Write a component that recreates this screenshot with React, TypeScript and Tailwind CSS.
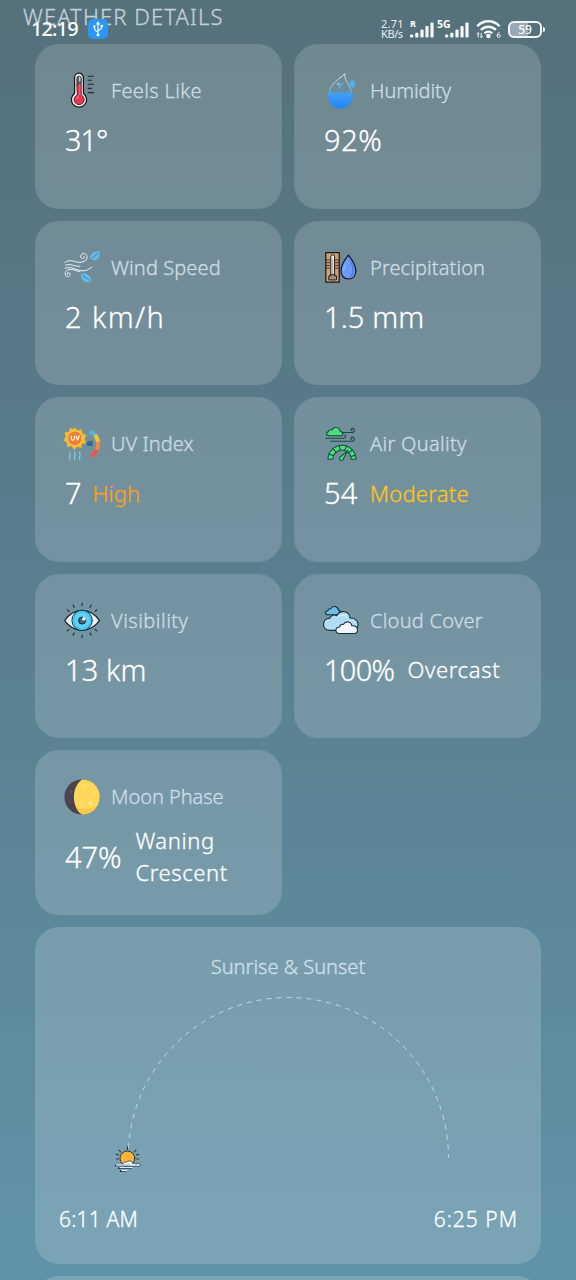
import React from "react";

type Metric = {
  label: string;
  labelClass: string;
  value: string;
  valueClass: string;
  note?: string;
  noteClass?: string;
  icon: React.ReactNode;
};

const Icon = ({ children }: { children: React.ReactNode }) => (
  <svg viewBox="0 0 36 36" className="h-9 w-9 shrink-0 overflow-visible" fill="none" strokeLinecap="round" strokeLinejoin="round">
    {children}
  </svg>
);

const Thermometer = () => (
  <Icon>
    <path d="M10.6 4.6a4.4 4.4 0 0 1 8.8 0V20.4a7.6 7.6 0 1 1-8.8 0Z" fill="#f4f5f8" stroke="#15171c" strokeWidth="1.3" />
    <path d="M12.9 10V5.2a2.2 2.2 0 0 1 4.4 0V10Z" fill="#55646d" stroke="#15171c" strokeWidth=".7" />
    <path d="M15.8 4v4" stroke="#dfe6ea" strokeWidth="1.2" />
    <path d="M13 11h4.2v10.9a5.1 5.1 0 1 1-4.2 0Z" fill="#e8394c" stroke="#3a1b25" strokeWidth=".8" />
    <path d="M15.8 11v11" stroke="#f56a72" strokeWidth="1" />
    <path d="M12.4 25.6a2.8 2.8 0 0 1 1.8-1.6" stroke="#ff98a0" strokeWidth="1" />
    <path d="M24.2 3.2h5.2M24.2 7.3h3.4M24.2 11.3h5.2M24.2 15.4h3.4M24.2 19.6h5.2" stroke="#22282c" strokeWidth="1.1" />
  </Icon>
);

const Humidity = () => (
  <Icon>
    <defs>
      <linearGradient id="water" x1="0" y1="16" x2="0" y2="35" gradientUnits="userSpaceOnUse">
        <stop stopColor="#49a8ee" />
        <stop offset="1" stopColor="#2484fb" />
      </linearGradient>
      <linearGradient id="shell" x1="0" y1="0" x2="0" y2="24" gradientUnits="userSpaceOnUse">
        <stop stopColor="#d9f3fa" />
        <stop offset="1" stopColor="#49a8ee" />
      </linearGradient>
    </defs>
    <path d="M6.2 22C5.8 11 15.8 6.6 21.8.8 21 8 28.6 14 29.1 22" stroke="url(#shell)" strokeWidth="1" />
    <path d="M5.7 20.2c2-1.8 4.2-2.2 6-.8 2.2 1.7 3.7-.6 5.7-.6s3.2 2 5.4.8c2-1.1 4.4-.9 6.3.2A12.2 12.2 0 1 1 5.7 20.2Z" fill="url(#water)" />
    <path d="m20.3 9.8-5 5.7" stroke="#62b9ef" strokeWidth="1.1" />
    <circle cx="15.5" cy="11" r="1.2" stroke="#8dd1f4" />
    <circle cx="20" cy="14.6" r="1.2" stroke="#3e9fe9" />
    <circle cx="13.3" cy="17.3" r=".9" fill="#45a3ec" />
    <circle cx="22.8" cy="17.7" r=".8" fill="#45a3ec" />
    <path d="M29.3 6c2 2.4 3.2 3.7 3.2 5.5a3 3 0 0 1-6 0c0-1.8 1.2-3.3 2.8-5.5Z" fill="#54aeee" />
  </Icon>
);

const Wind = () => (
  <Icon>
    <g stroke="#edf5fa" strokeWidth="1">
      <path d="M1 12.4c5.4-3.7 8.6-.6 12.9-.2 4.7.5 8.7-1 9.2-4.5.3-3.2-2.8-5-5.1-3.7-2.1 1.2-1.7 4.5.5 4.7 1.7.1 2.5-1.7 1.2-2.7" />
      <path d="M1.5 15.2c5-2.1 8.9 1.5 14.4 1.1M1 18.2c7-2.8 12 3.5 19.4 2.5 3.2-.4 5.3-2 7.5-3.7" />
      <path d="M15.8 21.8C11 20.4 7.3 18.5 3.8 20c-3.5 1.5-3.4 6.1-.4 6.6 2.8.4 3.7-3 1.6-3.9-1.3-.5-2.4.8-1.7 1.9" />
    </g>
    <path d="M26.6 9.6C25 4.6 29.4.4 35.6 1.6 36.8 8 32.6 12 26.6 9.6Z" fill="#62bde8" />
    <path d="m27.4 9 6.4-5.6" stroke="#2f83b0" strokeWidth=".9" />
    <path d="M16.8 24c5.2-2 10.6 1.2 10.4 8-6 1.4-11-2.2-10.4-8Z" fill="#62bde8" />
    <path d="m18.8 25.6 6.6 4.8" stroke="#2f83b0" strokeWidth=".9" />
  </Icon>
);

const Precipitation = () => (
  <Icon>
    <path d="M2.8 2.6h13.4v29.6H2.8Z" fill="#cfa16c" stroke="#15171b" strokeWidth="1.2" strokeLinejoin="miter" />
    <path d="M3.5 10h3M3.5 12.7h3M3.5 15.4h3M3.5 18.1h3M12.6 10h3M12.6 12.7h3M12.6 15.4h3M12.6 18.1h3" stroke="#2e241d" strokeWidth=".9" />
    <path d="M7.8 26.8V6.6a1.9 1.9 0 0 1 3.8 0v20.2" fill="#f1ece4" stroke="#15171b" strokeWidth="1" />
    <path d="M9.7 10v15" stroke="#9297a0" strokeWidth=".8" />
    <path d="M5.8 29.5v-3.6h1.8v-1.2h4.1v1.2h1.8v3.6Z" fill="#9b9486" stroke="#15171b" strokeWidth=".9" />
    <path d="M25.4 5.2c4.5 6.1 7.4 10.1 7.4 15.5 0 5-3 8.3-7.4 8.3s-7.4-3.3-7.4-8.3c0-5.4 2.9-9.4 7.4-15.5Z" fill="#6c9af5" stroke="#10152a" strokeWidth="1.2" />
    <path d="M26.8 9c3 4.6 4.3 7.4 4.3 11.4 0 3.8-2.1 6.6-5.3 7.2 6.3-5 2.5-12.6 1-18.6Z" fill="#4f80e6" />
    <path d="M20.7 20.4c0-2 .7-3.6 1.7-5.3" stroke="#a9c7ff" strokeWidth="1" />
  </Icon>
);

const UvIndex = () => (
  <Icon>
    <path d="m10.7 1.3 2.9 3.2 4.2-1.3.7 4.3 4 1.6-2 3.8 1.8 4-4.1 1-1.1 4.2-4-1.3-3 3-2.5-3.5-4.4.6-.2-4.4-3.6-2.2 2.3-3.5L.5 6.7l4.2-.9L6.2 2l3.8.9Z" fill="#f3bd2d" />
    <circle cx="10.9" cy="12.3" r="7.3" fill="#ed7c36" stroke="#f9d154" strokeWidth=".8" />
    <path d="M7.3 10v2.4c0 2.2 3.1 2.2 3.1 0V10M12 10l1.6 4 1.7-4" stroke="#fff4df" strokeWidth="1.25" />
    <path d="M6 26c-2 1.5 1.4 2.5 0 4s-.9 2.4 0 3.8M11 26c-2 1.5 1.4 2.5 0 4s-.9 2.4 0 3.8M16 26c-2 1.5 1.4 2.5 0 4s-.9 2.4 0 3.8" stroke="#7cc8ee" strokeWidth="1.2" />
    <g strokeWidth="4" strokeLinecap="butt">
      <path d="M25.8 5.7A13 13 0 0 1 31.2 9.1" stroke="#55b6dc" />
      <path d="M31 8.9A13 13 0 0 1 34 16.6" stroke="#f6bd3e" />
      <path d="M34 16A13 13 0 0 1 32.6 24" stroke="#f38a35" />
      <path d="M32.8 23.6A13 13 0 0 1 26.7 30" stroke="#e45850" />
    </g>
    <path d="m24.2 15.4 4.3-1 .3 5.6-3.6-.2a2.2 2.2 0 1 1-1-4.4Z" fill="#2b659c" />
  </Icon>
);

const AirQuality = () => (
  <Icon>
    <g stroke="#174b3e" strokeWidth="1.1">
      <path d="M7.2 9.8h10.2c3.2 0 3.1-4.3-.3-4.5-.6-4.5-6.7-5.2-8.2-1.3-2-.8-3.5.2-3.7 1.9-2.5.1-2.6 3.9 2 3.9Z" fill="#48df7c" />
      <path d="M19 6.5h10c3.1 0 2.9-4.1.5-4.1-1.7 0-2 2.1-.5 2.3M2.5 12.2h18c2.7 0 2.7-3.2.8-3.2M7.5 15.3h21c3.6 0 3.6-4.2.7-4.2-1.6 0-1.8 2-.5 2.4M4 12.2h1" />
      <path d="M5 33.2a14 14 0 0 1 28 0h-4.8a9.2 9.2 0 0 0-18.4 0Z" fill="#48df7c" />
      <path d="m6.1 28.1 4.3 1.7M10 22.7l3 3.3M16.3 19.5l.8 4.5M23.5 20.1l-1.8 4.2M29.4 24l-3.6 2.8M32 29.4l-4.2 1.1" />
      <path d="m25 24.3-7.2 6.3a2 2 0 1 0 2.6 2.2Z" fill="#48df7c" />
    </g>
  </Icon>
);

const Eye = () => (
  <Icon>
    <path d="M.7 17.7C9.8 4 26.2 4 35.5 17.7 26.2 30.5 9.8 30.5.7 17.7Z" fill="#e9eef2" stroke="#15232d" strokeWidth="1.2" />
    <circle cx="18.1" cy="17.4" r="10.2" fill="#49c3e9" stroke="#173d51" strokeWidth="1" />
    <circle cx="18.1" cy="17.4" r="7.6" fill="#5bd3f4" />
    <circle cx="18.1" cy="17.6" r="3.5" fill="#4d6270" stroke="#102735" strokeWidth="1" />
    <circle cx="19.9" cy="15.8" r="1.9" fill="#dceff5" />
    <path d="M18.1.1v2.5M9.1 2l1 2.4M27.1 2l-1 2.4M3.3 6.8l1.8 1.6M32.9 6.8l-1.8 1.6M18.1 32.1v2.5M9.1 32.3l1-2.3M27.1 32.3l-1-2.3M3.3 27.8l1.8-1.5M32.9 27.8l-1.8-1.5" stroke="#1a2830" strokeWidth="1.1" />
  </Icon>
);

const Clouds = () => (
  <Icon>
    <g stroke="#172e3d" strokeWidth="1.1">
      <path d="M5 11.8h10.2c3 0 3-4.5.1-4.7-.3-4-6-5.1-7.5-1.3-1.7-.3-2.7.6-2.9 1.9-3.2 0-3.2 4.1.1 4.1Z" fill="#71bfe8" />
      <path d="M7.2 27.4c-8.9 0-8.9-11.8-.3-12.3 1-2.9 4.3-3.8 6.8-2.4 3.2-6.2 13-5.2 13.3 2.4 9.6-.7 11.2 11.7 1.7 12.3Z" fill="#b2dcf4" />
      <path d="M16.4 30.5c-4.7 0-4.7-6.3.3-6.5.2-2.2 1.8-3.1 3.6-2.5 2.2-4.1 8.1-3.2 8.5 1.3 7.1-.7 7.2 7.7 2.4 7.7Z" fill="#eff5fa" />
    </g>
    <path d="M14 15c2-3.3 6.6-4 9.2-1.4" stroke="#e1f4fc" strokeWidth="1" />
  </Icon>
);

const Moon = () => (
  <Icon>
    <circle cx="18" cy="18" r="17.6" fill="#4c4250" />
    <path d="M18.2.4a17.6 17.6 0 0 1 0 35.2C7.1 28.4 7.1 7.8 18.2.4Z" fill="#ffd85b" />
    <path d="M12 28c4.2 2.6 14.4 2.5 20.8-.4A17.6 17.6 0 0 1 18.2 35.6C15.2 33.7 13 30.8 12 28Z" fill="#fbc54e" />
    <circle cx="16.2" cy="24" r="1.6" fill="#ffe27a" />
    <circle cx="26.3" cy="24.6" r="2" fill="#ffe991" />
    <circle cx="29.8" cy="14" r="1.2" fill="#ffe582" />
    <circle cx="20" cy="6" r="1.2" fill="#ffe582" />
    <circle cx="6.5" cy="13" r="1.7" fill="#5c5060" />
    <circle cx="6" cy="23" r="1.2" fill="#5c5060" />
  </Icon>
);

const metrics: Metric[] = [
  { label: "Feels Like", labelClass: "tracking-[0.35px]", value: "31°", valueClass: "tracking-[-1px]", icon: <Thermometer /> },
  { label: "Humidity", labelClass: "tracking-[-0.1px]", value: "92%", valueClass: "tracking-[0.6px]", icon: <Humidity /> },
  { label: "Wind Speed", labelClass: "tracking-[0.1px]", value: "2 km/h", valueClass: "tracking-[1.4px]", icon: <Wind /> },
  { label: "Precipitation", labelClass: "tracking-[0.1px]", value: "1.5 mm", valueClass: "tracking-[0.1px]", icon: <Precipitation /> },
  { label: "UV Index", labelClass: "tracking-[0.05px]", value: "7", valueClass: "", note: "High", noteClass: "-ml-px text-[#fba01a] tracking-[0.1px]", icon: <UvIndex /> },
  { label: "Air Quality", labelClass: "tracking-[0.3px]", value: "54", valueClass: "tracking-[0.3px]", note: "Moderate", noteClass: "text-[#ffc21c] tracking-[0.25px]", icon: <AirQuality /> },
  { label: "Visibility", labelClass: "tracking-[0.5px]", value: "13 km", valueClass: "tracking-[0.1px]", icon: <Eye /> },
  { label: "Cloud Cover", labelClass: "tracking-[0.25px]", value: "100%", valueClass: "tracking-[-0.7px]", note: "Overcast", noteClass: "pl-px tracking-[0.65px]", icon: <Clouds /> },
  { label: "Moon Phase", labelClass: "tracking-[-0.05px]", value: "47%", valueClass: "-mt-0.5 tracking-[-0.1px]", note: "Waning Crescent", noteClass: "-mt-0.5 pl-[2px] tracking-[0.6px]", icon: <Moon /> },
];

const MetricCard = ({ m }: { m: Metric }) => (
  <section className="flex flex-col rounded-[24px] bg-white/16 pt-[29px] pl-[29px]">
    <div className="flex h-9 items-center gap-[11px]">
      {m.icon}
      <h2 className={`text-[20px] leading-7 font-light whitespace-nowrap text-[#cddde6] ${m.labelClass}`}>{m.label}</h2>
    </div>
    <div className="mt-[11px] flex items-center gap-3 pl-px">
      <span className={`text-[29px] leading-10 font-light whitespace-nowrap ${m.valueClass}`}>{m.value}</span>
      {m.note && <span className={`mb-px max-w-[110px] text-[22px] leading-8 font-light ${m.noteClass}`}>{m.note}</span>}
    </div>
  </section>
);

const SignalBars = () => (
  <svg viewBox="0 0 24 16" className="h-4 w-6" fill="#f4f8fa">
    <rect x="0" y="12.5" width="3.2" height="3" rx="1" />
    <rect x="5.2" y="10.7" width="3.2" height="4.8" rx="1" />
    <rect x="10.4" y="7.5" width="3.2" height="8" rx="1" />
    <rect x="15.4" y="4" width="3.2" height="11.5" rx="1" />
    <rect x="20.4" y="0.5" width="3.2" height="15" rx="1" />
  </svg>
);

const StatusBar = () => (
  <header className="absolute inset-x-0 top-0 flex h-[58px] items-center justify-between pr-[31px] pl-[31px]">
    <div className="flex items-center gap-[9px]">
      <span className="w-[48px] text-[20px] leading-7 font-medium tracking-[-0.9px] whitespace-nowrap">12:19</span>
      <svg viewBox="0 0 20 20" className="h-5 w-5" fill="none" stroke="#fff" strokeWidth="1.1" strokeLinecap="round" strokeLinejoin="round">
        <rect width="20" height="20" rx="5" fill="#2c96f8" stroke="none" />
        <path d="M10 4.5v11M10 12.8c-2.2-.7-3.6-1.7-3.6-4.4M10 11.2c2.4-.5 3.8-1.3 3.8-4" />
        <path d="m8.8 5.1 1.2-2 1.2 2Z" fill="#fff" />
        <circle cx="6.4" cy="7.6" r=".7" fill="#fff" />
        <path d="M13 6.2h1.5v1.4H13Z" fill="#fff" />
        <circle cx="10" cy="15.8" r="1" fill="#fff" />
      </svg>
    </div>
    <div className="flex items-center">
      <div className="mr-[6px] w-[23px] text-[11px] leading-[10px] font-normal text-[#e8eff2]">
        <div className="tracking-[0.2px]">2.71</div>
        <div className="tracking-[-0.4px] whitespace-nowrap">KB/s</div>
      </div>
      <div className="relative mr-[3px] pt-[1px]">
        <span className="absolute -top-[2px] left-0 text-[9px] leading-[10px] font-bold">R</span>
        <SignalBars />
      </div>
      <div className="relative mr-[7px] w-[32px] pt-[1px] pl-[8px]">
        <span className="absolute -top-[2px] left-0 text-[10.5px] leading-[10px] font-bold">5G</span>
        <SignalBars />
      </div>
      <svg viewBox="0 0 26 20" className="h-5 w-[26px]" fill="none" stroke="#f4f8fa" strokeWidth="2.4">
        <path d="M1.2 7.2C7.5.5 17.3.5 23.6 7.2M4.9 10.9C9 6.7 15.8 6.7 19.9 10.9M8.6 14.3C10.7 12.3 14 12.3 16.2 14.3" />
        <circle cx="12.4" cy="17" r="2.2" fill="#f4f8fa" stroke="none" />
        <path d="M2.2 13.8v4.6M5.2 14v4.6" strokeWidth="1" />
        <path d="m.6 15.4 1.6-1.8 1 1.2M4.2 17.4l1 1.4 1.6-1.8" strokeWidth=".8" />
        <path d="M23.6 13.4c-1.8.5-2.4 1.6-2.4 3.4" strokeWidth="1" />
        <circle cx="22.7" cy="16.8" r="1.5" strokeWidth="1" />
      </svg>
      <div className="ml-[6px] flex items-center gap-px">
        <div className="flex h-[17px] w-[34px] items-center justify-center rounded-[6px] border-2 border-[#f0f6f8] bg-linear-to-r from-[#98aab1] from-58% to-transparent to-60%">
          <span className="pt-px text-[12px] leading-none font-medium">59</span>
        </div>
        <div className="h-[5px] w-[2px] rounded-r bg-[#f0f6f8]" />
      </div>
    </div>
  </header>
);

const SunIcon = () => (
  <g transform="translate(114 1145)" strokeLinecap="round" strokeLinejoin="round">
    <path d="M13.4.8v2.7M5 4l1.7 2M22 4l-1.7 2M2.2 8.3l2.2.6M24.8 8.3l-2.2.6M2.4 13h1.8M24.6 13h-1.7" stroke="#24323a" strokeWidth="1.1" />
    <circle cx="13.4" cy="12.4" r="7.4" fill="#fcb339" stroke="#15222b" strokeWidth=".9" />
    <path d="M9.5 19.5c-1.7-1.9.5-4.4 2.8-3 1.8-2.6 6-2 6.4 1 1.8-.8 3 .1 3.2.8 2.1-1.8 5-1 4.1.9-.5 1.1-1.8 1-3.4 1H12Z" fill="#edf7ff" stroke="#15222b" strokeWidth=".7" />
    <path d="M1.7 19.4h13.5M5 22.2h12M6.7 25h5" stroke="#15222b" strokeWidth="1.8" />
    <path d="M2.5 19h14M6 21.7h12M7.7 24.5h5" stroke="#d3ebff" strokeWidth="1.3" />
  </g>
);

export default function App() {
  return (
    <main className="relative h-[1280px] w-[576px] overflow-hidden bg-linear-to-b from-[#55717a] via-[#5a8090] to-[#6093a9] font-['Noto_Sans',sans-serif] text-white">
      <h1 className="mb-[13px] pt-px pl-[23px] text-[22px] leading-[30px] font-light tracking-[1.1px] text-[#c3d2d9] [-webkit-text-stroke:0.3px]">WEATHER DETAILS</h1>
      <StatusBar />
      <div className="flex flex-col gap-3 pr-[35px] pl-[35px] [-webkit-text-stroke:0.3px]">
        <div className="grid auto-rows-[164.5px] grid-cols-2 gap-3">
          {metrics.map((m) => (
            <MetricCard key={m.label} m={m} />
          ))}
        </div>
        <section className="flex h-[337px] flex-col rounded-[24px] bg-white/17 px-[23px] pt-[26px]">
          <h2 className="text-center text-[20px] leading-7 font-light text-[#d0e0e8]">Sunrise &amp; Sunset</h2>
          <svg viewBox="58 980 460 210" className="h-[210px] w-[460px]" fill="none">
            <path d="M128 1157a160.25 160.5 0 0 1 320.5 0" stroke="#c6d8e1" strokeWidth="1" strokeDasharray="5 5" />
            <SunIcon />
          </svg>
          <div className="mt-[14px] flex justify-between pl-px text-[21px] leading-7 font-light">
            <span className="tracking-[0.2px]">6:11 AM</span>
            <span className="tracking-[1px]">6:25 PM</span>
          </div>
        </section>
        <section className="h-[164px] rounded-[24px] bg-white/17" />
      </div>
    </main>
  );
}
